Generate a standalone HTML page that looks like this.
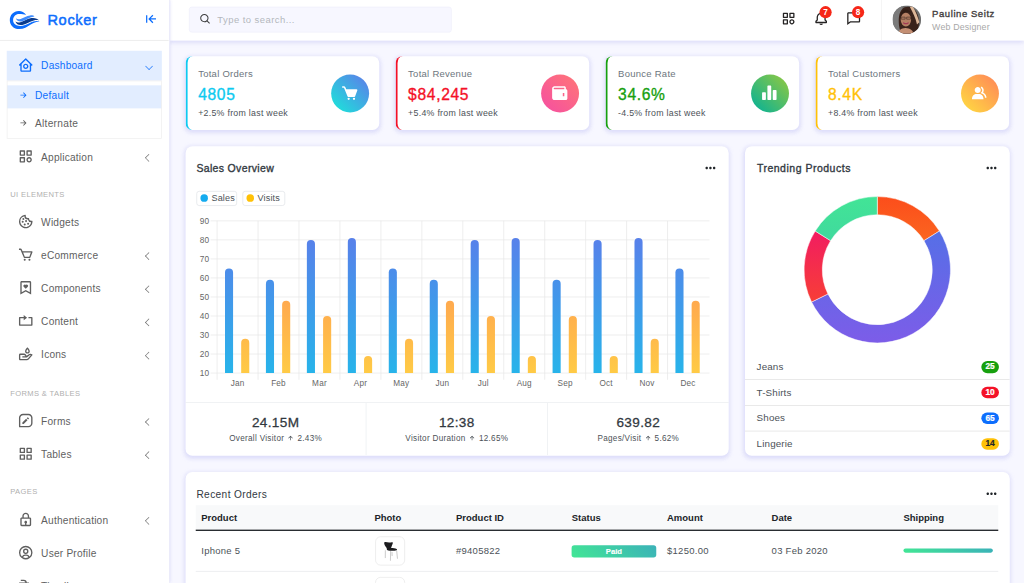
<!DOCTYPE html>
<html lang="en">
<head>
<meta charset="utf-8">
<title>Rocker - Dashboard</title>
<style>
*{box-sizing:border-box}
html,body{margin:0;padding:0;width:1024px;height:583px;overflow:hidden;background:#f7f7ff}
body{font-family:"Liberation Sans",Arial,sans-serif;color:#4c5258}
#wrap{position:absolute;left:0;top:0;width:1512px;height:861px;transform:scale(0.677249);transform-origin:0 0;font-size:14px;letter-spacing:.2px;overflow:hidden;background:#f7f7ff}
p,h4,h5,h6,ul{margin:0;padding:0}
ul{list-style:none}
svg{display:block}
/* sidebar */
#sidebar{position:absolute;left:0;top:0;width:249.5px;height:861px;background:#fff;box-shadow:0 2px 6px rgba(218,218,253,.85),0 2px 6px rgba(206,206,238,.7),1px 0 0 #eaeafa,3px 0 3px rgba(218,218,253,.55)}
#sb-head{position:absolute;left:0;top:0;width:249px;height:59.8px;border-bottom:1px solid #e4e4e4;display:flex;align-items:center;padding:0 15px}
#sb-head .logo-text{position:absolute;left:70px;top:14.8px;font-size:21.5px;line-height:30px;color:#0d6efd;font-weight:normal;-webkit-text-stroke:.7px #0d6efd;letter-spacing:1px}
#sb-head .tog{margin-left:auto;color:#008cff}
#menu{position:absolute;left:0;top:0;width:249px;height:861px}
#menu a.mi{position:absolute;left:10px;width:229px;display:flex;align-items:center;height:44px;padding:0 15px 0 16.2px;color:#5f5f5f;font-size:15px;letter-spacing:.3px}
#menu a.mi .ic{width:24px;height:24px;flex:none}
#menu a.mi .t{margin-left:10.5px;position:relative;top:.7px}
#menu a.mi.act{color:#0d6efd;background:rgba(13,110,253,.12);padding-bottom:2.0px}
#menu a.mi.act .t{top:0}
#menu .lab{position:absolute;left:15px;color:#b0afaf;text-transform:uppercase;font-size:11.2px;letter-spacing:.55px;line-height:16px;height:16px;white-space:nowrap}
#menu .sub{position:absolute;left:10px;top:119px;width:229px;height:85.5px;border:1px solid #ededed}
#menu .sub a{position:absolute;left:0;width:227px;display:flex;align-items:center;height:34px;padding:0 15px 1.2px 15.5px;color:#5f5f5f;font-size:15px;letter-spacing:.45px}
#menu .sub a.act{color:#0d6efd;background:rgba(13,110,253,.12);padding-bottom:4.6px}
#menu .sub a svg{margin-right:10px}
.chev{position:absolute;width:7.5px;height:7.5px;border-left:1.05px solid currentColor;border-bottom:1.05px solid currentColor;opacity:.9}
.chev.l{left:205.5px;top:20px;transform:rotate(45deg)}
.chev.d{left:206px;top:18.5px;transform:rotate(-45deg)}
/* topbar */
#topbar{position:absolute;left:250px;top:0;width:1262px;height:59.5px;background:#fff;box-shadow:0 2px 6px rgba(218,218,253,.65),0 2px 6px rgba(206,206,238,.54)}
#search{position:absolute;left:29.3px;top:10.4px;width:387.8px;height:37.6px;background:#f7f7ff;border:1px solid #eeeefb;border-radius:4px;color:#b4b8bd;font-size:14px;line-height:36px;padding-left:40.600px;letter-spacing:.65px}
.cnt{position:absolute;top:8.700px;width:18px;height:18px;border-radius:50%;background:#f62718;color:#fff;font-size:12px;font-weight:bold;line-height:18px;text-align:center;letter-spacing:0}
#userbox{position:absolute;left:1051.3px;top:0;width:211px;height:60px;border-left:1px solid #f0f0f0}
#userbox .un{position:absolute;left:74px;top:10.800px;font-size:14px;line-height:18px;font-weight:normal;-webkit-text-stroke:.5px #413c3c;color:#413c3c;white-space:nowrap;letter-spacing:.85px}
#userbox .ud{position:absolute;left:74px;top:31.500px;font-size:13px;line-height:16px;color:#a8a8a8;white-space:nowrap;letter-spacing:.25px}
/* cards */
.card{position:absolute;background:#fff;border-radius:10px;box-shadow:0 2px 6px rgba(218,218,253,.65),0 2px 6px rgba(206,206,238,.54)}
.w{height:108.6px;top:83.2px;width:286px;border-left:3px solid #0dcaf0;padding:16.2px 16px 16px 15.6px}
.w .l1{color:#6c757d;font-size:14px;line-height:21px;letter-spacing:.4px}
.w .l2{font-size:23px;line-height:29px;margin:4.8px 0 4px;font-weight:normal;letter-spacing:1px;-webkit-text-stroke:.5px currentColor}
.w .l3{font-size:13px;line-height:19.5px;letter-spacing:.4px}
.w .ci{position:absolute;right:15.5px;top:26.4px;width:56px;height:56px;border-radius:50%;display:flex;align-items:center;justify-content:center}
h6{font-size:15.5px;line-height:19px;font-weight:normal;-webkit-text-stroke:.5px #32393f;color:#32393f;letter-spacing:.5px}
.dots{position:absolute;right:16px;top:21.500px}
.lg{position:absolute;top:66.3px;height:22.300px;border:1px solid #dee2e6;border-radius:4px;font-size:13.4px;line-height:19.500px;padding-left:5px;white-space:nowrap;letter-spacing:.2px;color:#4c5258}
.lg i{display:inline-block;width:10.800px;height:10.800px;border-radius:50%;margin-right:5.5px;vertical-align:-1px}
.stats{position:absolute;left:0;top:378.7px;width:100%;height:78px;border-top:1px solid #e9ecef;display:flex}
.stats>div{flex:1;text-align:center;padding-top:17px}
.stats>div:first-child{flex:none;width:266px}
.stats>div+div{border-left:1px solid #e9ecef}
.stats h5{font-size:20px;line-height:24px;font-weight:normal;-webkit-text-stroke:.42px #32393f;color:#32393f;margin:0;letter-spacing:.55px}
.stats small{font-size:12px;line-height:19px;display:block;letter-spacing:.45px;margin-top:1.800px}
.plist{position:absolute;left:0;top:306.700px;width:100%}
.plist li{display:flex;justify-content:space-between;align-items:center;height:38px;padding:0 16px 0 17.2px;font-size:14.5px;letter-spacing:.2px;color:#4c5258}
.plist li+li{border-top:1px solid #dfdfdf;padding-bottom:2.2px}
.plist b{display:inline-block;min-width:26.3px;height:17.700px;border-radius:10px;font-size:12.3px;line-height:17.700px;text-align:center;letter-spacing:0;position:relative;top:.9px;-webkit-text-stroke:.3px currentColor}
.plist li:first-child b{top:.5px}
.thead{position:absolute;background:#f8f9fa}
.thline{position:absolute;height:1.350px;background:#23272b}
.th{position:absolute;top:57.2px;font-size:14px;font-weight:bold;line-height:21px;color:#212529;white-space:nowrap;letter-spacing:0}
.td{position:absolute;font-size:14px;line-height:21px;color:#4c5258;white-space:nowrap;letter-spacing:.4px}
.rowline{position:absolute;height:1px;background:#e4e7ea}
.pimg{position:absolute;width:43.600px;height:43.600px;border:1px solid #e6e6e6;border-radius:8px;background:#fff;overflow:hidden}
.pimg svg{position:absolute;left:-1px;top:-1px}
.paid{position:absolute;height:17.500px;border-radius:4px;background:linear-gradient(45deg,#42e695,#3bb2b8);color:#fff;font-size:11.300px;font-weight:bold;line-height:19px;-webkit-text-stroke:.2px #fff;text-align:center;letter-spacing:0}
.prog{position:absolute;height:5.500px;border-radius:4px;background:linear-gradient(45deg,#42e695,#3bb2b8)}
</style>
</head>
<body>
<div id="wrap">

<!-- MAIN CONTENT -->
<div id="main">
  <div class="card w" style="left:274px;border-left-color:#0dcaf0">
    <p class="l1">Total Orders</p><h4 class="l2" style="color:#0dcaf0">4805</h4><p class="l3">+2.5% from last week</p>
    <div class="ci" style="background:linear-gradient(45deg,#17ead9,#6078ea)"><svg width="27" height="27" viewBox="0 0 24 24" fill="#fff"><path d="M21.822 7.431A1 1 0 0 0 21 7H7.333L6.179 4.230A1.994 1.994 0 0 0 4.333 3H2v2h2.333l4.744 11.385A1 1 0 0 0 10 17h8c.417 0 .790-.259.937-.648l3-8a1 1 0 0 0-.115-.921z"/><circle cx="10.500" cy="19.500" r="1.500"/><circle cx="17.500" cy="19.500" r="1.500"/></svg></div>
  </div>
  <div class="card w" style="left:584px;border-left-color:#f41127">
    <p class="l1">Total Revenue</p><h4 class="l2" style="color:#f41127">$84,245</h4><p class="l3">+5.4% from last week</p>
    <div class="ci" style="background:linear-gradient(45deg,#f54ea2,#ff7676)"><svg width="27" height="27" viewBox="0 0 24 24" fill="#fff"><path d="M20 7V5c0-1.103-.897-2-2-2H5C3.346 3 2 4.346 2 6v12c0 2.201 1.794 3 3 3h15c1.103 0 2-.897 2-2V9c0-1.103-.897-2-2-2zm-2 9h-2v-4h2v4zM5 7a1.001 1.001 0 0 1 0-2h13v2H5z"/></svg></div>
  </div>
  <div class="card w" style="left:894px;border-left-color:#17a00e">
    <p class="l1">Bounce Rate</p><h4 class="l2" style="color:#17a00e">34.6%</h4><p class="l3">-4.5% from last week</p>
    <div class="ci" style="background:linear-gradient(45deg,#00b09b,#96c93d)"><svg width="27" height="27" viewBox="0 0 24 24" fill="#fff"><path d="M6 21H3a1 1 0 0 1-1-1v-8a1 1 0 0 1 1-1h3a1 1 0 0 1 1 1v8a1 1 0 0 1-1 1zm7 0h-3a1 1 0 0 1-1-1V3a1 1 0 0 1 1-1h3a1 1 0 0 1 1 1v17a1 1 0 0 1-1 1zm7 0h-3a1 1 0 0 1-1-1V9a1 1 0 0 1 1-1h3a1 1 0 0 1 1 1v11a1 1 0 0 1-1 1z"/></svg></div>
  </div>
  <div class="card w" style="left:1204px;border-left-color:#ffc107">
    <p class="l1">Total Customers</p><h4 class="l2" style="color:#ffc107">8.4K</h4><p class="l3">+8.4% from last week</p>
    <div class="ci" style="background:linear-gradient(45deg,#ffdf40,#ff8359)"><svg width="27" height="27" viewBox="0 0 24 24" fill="#fff"><path d="M16.604 11.048a5.670 5.670 0 0 0 .751-3.440c-.179-1.784-1.175-3.361-2.803-4.440l-1.105 1.666c1.119.742 1.800 1.799 1.918 2.974a3.693 3.693 0 0 1-1.072 2.986l-1.192 1.192 1.618.475C18.951 13.701 19 17.957 19 18h2c0-1.789-.956-5.285-4.396-6.952z"/><path d="M9.500 12c2.206 0 4-1.794 4-4s-1.794-4-4-4-4 1.794-4 4 1.794 4 4 4zm1.500 1H8c-3.309 0-6 2.691-6 6v1h15v-1c0-3.309-2.691-6-6-6z"/></svg></div>
  </div>

  <div class="card" id="sales" style="left:274px;top:215.6px;width:802px;height:457px">
    <h6 style="position:absolute;left:16px;top:23.4px">Sales Overview</h6>
    <svg class="dots" width="22" height="22" viewBox="0 0 24 24" fill="#212529"><path d="M12 10c-1.100 0-2 .900-2 2s.900 2 2 2 2-.900 2-2-.900-2-2-2zm6 0c-1.100 0-2 .900-2 2s.900 2 2 2 2-.900 2-2-.900-2-2-2zM6 10c-1.100 0-2 .900-2 2s.900 2 2 2 2-.900 2-2-.900-2-2-2z"/></svg>
    <span class="lg" style="left:16px;width:60px"><i style="background:#14abef"></i>Sales</span>
    <span class="lg" style="left:84px;width:62.500px"><i style="background:#ffc107"></i>Visits</span>
    <svg style="position:absolute;left:0;top:0" width="802" height="456.4" viewBox="185.566 146.015 543.154 309.096">
      <defs><linearGradient id="gs" gradientUnits="userSpaceOnUse" x1="0" y1="215.3" x2="0" y2="418.5"><stop offset="0" stop-color="#6078ea"/><stop offset="1" stop-color="#17c5ea"/></linearGradient><linearGradient id="gv" gradientUnits="userSpaceOnUse" x1="0" y1="215.3" x2="0" y2="418.5"><stop offset="0" stop-color="#ff8359"/><stop offset="1" stop-color="#ffdf40"/></linearGradient></defs>
      <path d="M210.600 220.60H709.500M210.600 239.62H709.500M210.600 258.65H709.500M210.600 277.68H709.500M210.600 296.70H709.500M210.600 315.73H709.500M210.600 334.75H709.500M210.600 353.77H709.500M210.600 372.80H709.500M217.10 220.60V379.500M258.05 220.60V379.500M299.00 220.60V379.500M339.95 220.60V379.500M380.90 220.60V379.500M421.85 220.60V379.500M462.80 220.60V379.500M503.75 220.60V379.500M544.70 220.60V379.500M585.65 220.60V379.500M626.60 220.60V379.500M667.55 220.60V379.500" stroke="#e6e6e6" stroke-width="0.700" fill="none"/>
      <g font-family="Liberation Sans, Arial, sans-serif" font-size="8.300" fill="#666" text-anchor="end">
      <text x="209.300" y="223.40">90</text>
      <text x="209.300" y="242.43">80</text>
      <text x="209.300" y="261.45">70</text>
      <text x="209.300" y="280.48">60</text>
      <text x="209.300" y="299.50">50</text>
      <text x="209.300" y="318.53">40</text>
      <text x="209.300" y="337.55">30</text>
      <text x="209.300" y="356.57">20</text>
      <text x="209.300" y="375.60">10</text>
      </g>
      <g font-family="Liberation Sans, Arial, sans-serif" font-size="8.200" fill="#666" text-anchor="middle">
      <text x="237.57" y="385.600">Jan</text>
      <text x="278.52" y="385.600">Feb</text>
      <text x="319.48" y="385.600">Mar</text>
      <text x="360.43" y="385.600">Apr</text>
      <text x="401.38" y="385.600">May</text>
      <text x="442.33" y="385.600">Jun</text>
      <text x="483.27" y="385.600">Jul</text>
      <text x="524.23" y="385.600">Aug</text>
      <text x="565.18" y="385.600">Sep</text>
      <text x="606.12" y="385.600">Oct</text>
      <text x="647.08" y="385.600">Nov</text>
      <text x="688.02" y="385.600">Dec</text>
      </g>
      <g transform="translate(-0.45 0)"><path d="M225.42 372.80V272.21a4.05 4.05 0 0 1 8.1 0V372.80z" fill="url(#gs)"/>
      <path d="M241.62 372.80V342.61a4.05 4.05 0 0 1 8.1 0V372.80z" fill="url(#gv)"/>
      <path d="M266.37 372.80V283.63a4.05 4.05 0 0 1 8.1 0V372.80z" fill="url(#gs)"/>
      <path d="M282.57 372.80V304.56a4.05 4.05 0 0 1 8.1 0V372.80z" fill="url(#gv)"/>
      <path d="M307.32 372.80V243.68a4.05 4.05 0 0 1 8.1 0V372.80z" fill="url(#gs)"/>
      <path d="M323.53 372.80V319.78a4.05 4.05 0 0 1 8.1 0V372.80z" fill="url(#gv)"/>
      <path d="M348.27 372.80V241.77a4.05 4.05 0 0 1 8.1 0V372.80z" fill="url(#gs)"/>
      <path d="M364.48 372.80V359.73a4.05 4.05 0 0 1 8.1 0V372.80z" fill="url(#gv)"/>
      <path d="M389.22 372.80V272.21a4.05 4.05 0 0 1 8.1 0V372.80z" fill="url(#gs)"/>
      <path d="M405.43 372.80V342.61a4.05 4.05 0 0 1 8.1 0V372.80z" fill="url(#gv)"/>
      <path d="M430.18 372.80V283.63a4.05 4.05 0 0 1 8.1 0V372.80z" fill="url(#gs)"/>
      <path d="M446.38 372.80V304.56a4.05 4.05 0 0 1 8.1 0V372.80z" fill="url(#gv)"/>
      <path d="M471.12 372.80V243.68a4.05 4.05 0 0 1 8.1 0V372.80z" fill="url(#gs)"/>
      <path d="M487.32 372.80V319.78a4.05 4.05 0 0 1 8.1 0V372.80z" fill="url(#gv)"/>
      <path d="M512.08 372.80V241.77a4.05 4.05 0 0 1 8.1 0V372.80z" fill="url(#gs)"/>
      <path d="M528.28 372.80V359.73a4.05 4.05 0 0 1 8.1 0V372.80z" fill="url(#gv)"/>
      <path d="M553.03 372.80V283.63a4.05 4.05 0 0 1 8.1 0V372.80z" fill="url(#gs)"/>
      <path d="M569.23 372.80V319.78a4.05 4.05 0 0 1 8.1 0V372.80z" fill="url(#gv)"/>
      <path d="M593.98 372.80V243.68a4.05 4.05 0 0 1 8.1 0V372.80z" fill="url(#gs)"/>
      <path d="M610.18 372.80V359.73a4.05 4.05 0 0 1 8.1 0V372.80z" fill="url(#gv)"/>
      <path d="M634.93 372.80V241.77a4.05 4.05 0 0 1 8.1 0V372.80z" fill="url(#gs)"/>
      <path d="M651.13 372.80V342.61a4.05 4.05 0 0 1 8.1 0V372.80z" fill="url(#gv)"/>
      <path d="M675.88 372.80V272.21a4.05 4.05 0 0 1 8.1 0V372.80z" fill="url(#gs)"/>
      <path d="M692.08 372.80V304.56a4.05 4.05 0 0 1 8.1 0V372.80z" fill="url(#gv)"/></g>
    </svg>
    <div class="stats">
      <div><h5>24.15M</h5><small>Overall Visitor <svg width="12" height="12" viewBox="0 0 24 24" fill="currentColor" style="display:inline-block;vertical-align:-2px"><path d="M11 8.414V18h2V8.414l4.293 4.293 1.414-1.414L12 4.586l-6.707 6.707 1.414 1.414z"/></svg> 2.43%</small></div>
      <div><h5>12:38</h5><small>Visitor Duration <svg width="12" height="12" viewBox="0 0 24 24" fill="currentColor" style="display:inline-block;vertical-align:-2px"><path d="M11 8.414V18h2V8.414l4.293 4.293 1.414-1.414L12 4.586l-6.707 6.707 1.414 1.414z"/></svg> 12.65%</small></div>
      <div><h5>639.82</h5><small>Pages/Visit <svg width="12" height="12" viewBox="0 0 24 24" fill="currentColor" style="display:inline-block;vertical-align:-2px"><path d="M11 8.414V18h2V8.414l4.293 4.293 1.414-1.414L12 4.586l-6.707 6.707 1.414 1.414z"/></svg> 5.62%</small></div>
    </div>
  </div>
  <div class="card" id="trend" style="left:1100px;top:215.6px;width:391px;height:457px;overflow:hidden">
    <h6 style="position:absolute;left:17.6px;top:23.4px;letter-spacing:.75px">Trending Products</h6>
    <svg class="dots" width="22" height="22" viewBox="0 0 24 24" fill="#212529"><path d="M12 10c-1.100 0-2 .900-2 2s.900 2 2 2 2-.900 2-2-.900-2-2-2zm6 0c-1.100 0-2 .900-2 2s.900 2 2 2 2-.900 2-2-.900-2-2-2zM6 10c-1.100 0-2 .900-2 2s.900 2 2 2 2-.900 2-2-.900-2-2-2z"/></svg>
    <svg style="position:absolute;left:0;top:0" width="391" height="456.4" viewBox="744.974 146.015 264.804 309.096">
      <defs><linearGradient id="g1" gradientUnits="userSpaceOnUse" x1="0" y1="190" x2="0" y2="393.2"><stop offset="0" stop-color="#fc4a1a"/><stop offset="1" stop-color="#f7b733"/></linearGradient><linearGradient id="g2" gradientUnits="userSpaceOnUse" x1="0" y1="190" x2="0" y2="393.2"><stop offset="0" stop-color="#4776e6"/><stop offset="1" stop-color="#8e54e9"/></linearGradient><linearGradient id="g3" gradientUnits="userSpaceOnUse" x1="0" y1="190" x2="0" y2="393.2"><stop offset="0" stop-color="#ee0979"/><stop offset="1" stop-color="#ff6a00"/></linearGradient><linearGradient id="g4" gradientUnits="userSpaceOnUse" x1="0" y1="190" x2="0" y2="393.2"><stop offset="0" stop-color="#42e695"/><stop offset="1" stop-color="#3bb2b8"/></linearGradient></defs>
      <path d="M877.30 196.30A73.2 73.2 0 0 1 939.42 230.78L923.98 240.41A55.0 55.0 0 0 0 877.30 214.50z" fill="url(#g1)" stroke="#fff" stroke-width="0.500"/><path d="M939.42 230.78A73.2 73.2 0 1 1 811.58 301.74L827.92 293.72A55.0 55.0 0 1 0 923.98 240.41z" fill="url(#g2)" stroke="#fff" stroke-width="0.500"/><path d="M811.58 301.74A73.2 73.2 0 0 1 815.18 230.78L830.62 240.41A55.0 55.0 0 0 0 827.92 293.72z" fill="url(#g3)" stroke="#fff" stroke-width="0.500"/><path d="M815.18 230.78A73.2 73.2 0 0 1 877.30 196.30L877.30 214.50A55.0 55.0 0 0 0 830.62 240.41z" fill="url(#g4)" stroke="#fff" stroke-width="0.500"/>
    </svg>
    <ul class="plist"><li><span>Jeans</span><b style="background:#17a00e;color:#fff">25</b></li><li><span>T-Shirts</span><b style="background:#f41127;color:#fff">10</b></li><li><span>Shoes</span><b style="background:#0d6efd;color:#fff">65</b></li><li><span>Lingerie</span><b style="background:#ffc107;color:#212529">14</b></li></ul>
  </div>
  <div class="card" id="orders" style="left:274px;top:696.9px;width:1217px;height:300px">
    <h6 style="position:absolute;left:16px;top:24.3px;-webkit-text-stroke:0;font-size:15px;letter-spacing:.55px">Recent Orders</h6>
    <svg class="dots" width="22" height="22" viewBox="0 0 24 24" fill="#212529"><path d="M12 10c-1.100 0-2 .900-2 2s.900 2 2 2 2-.900 2-2-.900-2-2-2zm6 0c-1.100 0-2 .900-2 2s.900 2 2 2 2-.900 2-2-.900-2-2-2zM6 10c-1.100 0-2 .900-2 2s.900 2 2 2 2-.900 2-2-.900-2-2-2z"/></svg>
    <div class="thead" style="left:15.4px;top:49.0px;width:1185.1px;height:36.5px"></div>
    <div class="thline" style="left:15.4px;top:85.5px;width:1185.1px"></div>
    <span class="th" style="left:23.2px">Product</span><span class="th" style="left:278.8px">Photo</span><span class="th" style="left:399.3px">Product ID</span><span class="th" style="left:570.2px">Status</span><span class="th" style="left:710.9px">Amount</span><span class="th" style="left:865.3px">Date</span><span class="th" style="left:1059.9px">Shipping</span>
    <div class="rowline" style="left:15.4px;top:146.6px;width:1185.1px"></div>
    <span class="td" style="left:23.2px;top:106.2px">Iphone 5</span>
    <div class="pimg" style="left:280.0px;top:95.0px"><svg width="43.600" height="43.600" viewBox="0 0 43.600 43.600"><path d="M15 20.500 14.900 32M22.800 21.300 22.500 36M31.700 21 32.900 33M24.800 23 25 29" stroke="#b9b9b9" stroke-width="1.100" fill="none"/><path d="M13.200 9.600c0-1 .800-1.400 2-1.200 3.500.700 6.500.700 9.500.200 1-.200 1.600.400 1.300 1.400-.800 2.600-2 5-2.600 7.300 3 .100 6.500.500 8.300 1.400.800.400.800 1.200 0 1.600-2.500 1.200-8.500 1.400-12.500.600-1.300-.300-2-.900-2-1.900 0-.800-.300-1.500-.800-2.400-1.500-2.300-3-4.500-3.200-7z" fill="#1d1d1f"/></svg></div>
    <div class="pimg" style="left:280.0px;top:155.4px"></div>
    <span class="td" style="left:399.3px;top:106.2px">#9405822</span>
    <span class="paid" style="left:570.3px;top:108.6px;width:124.3px">Paid</span>
    <span class="td" style="left:710.9px;top:106.2px">$1250.00</span>
    <span class="td" style="left:865.3px;top:106.2px">03 Feb 2020</span>
    <div class="prog" style="left:1059.9px;top:113.2px;width:132.6px"></div>
  </div>
</div>

<!-- TOPBAR -->
<div id="topbar">
  <div id="search">Type to search...</div>
  <svg width="18.6" height="18.6" viewBox="0 0 24 24" fill="#404142" style="position:absolute;left:44.19999999999999px;top:19.2px"><path d="M10 18a7.952 7.952 0 0 0 4.897-1.688l4.396 4.396 1.414-1.414-4.396-4.396A7.952 7.952 0 0 0 18 10c0-4.411-3.589-8-8-8s-8 3.589-8 8 3.589 8 8 8zm0-14c3.309 0 6 2.691 6 6s-2.691 6-6 6-6-2.691-6-6 2.691-6 6-6z"/></svg>
  <svg width="23" height="23" viewBox="0 0 24 24" fill="#252323" style="position:absolute;left:903.0999999999999px;top:15.8px"><path d="M10 3H4a1 1 0 0 0-1 1v6a1 1 0 0 0 1 1h6a1 1 0 0 0 1-1V4a1 1 0 0 0-1-1zM9 9H5V5h4v4zm11-6h-6a1 1 0 0 0-1 1v6a1 1 0 0 0 1 1h6a1 1 0 0 0 1-1V4a1 1 0 0 0-1-1zm-1 6h-4V5h4v4zm-9 4H4a1 1 0 0 0-1 1v6a1 1 0 0 0 1 1h6a1 1 0 0 0 1-1v-6a1 1 0 0 0-1-1zm-1 6H5v-4h4v4zm8-6c-2.206 0-4 1.794-4 4s1.794 4 4 4 4-1.794 4-4-1.794-4-4-4zm0 6c-1.103 0-2-.897-2-2s.897-2 2-2 2 .897 2 2-.897 2-2 2z"/></svg>
  <svg width="23" height="23" viewBox="0 0 24 24" fill="#252323" style="position:absolute;left:950.8px;top:15.8px"><path d="M19 13.586V10c0-3.217-2.185-5.927-5.145-6.742C13.562 2.520 12.846 2 12 2s-1.562.520-1.855 1.258C7.185 4.074 5 6.783 5 10v3.586l-1.707 1.707A.996.996 0 0 0 3 16v2a1 1 0 0 0 1 1h16a1 1 0 0 0 1-1v-2a.996.996 0 0 0-.293-.707L19 13.586zM19 17H5v-.586l1.707-1.707A.996.996 0 0 0 7 14v-4c0-2.757 2.243-5 5-5s5 2.243 5 5v4c0 .266.105.520.293.707L19 16.414V17zm-7 5a2.980 2.980 0 0 0 2.818-2H9.182A2.980 2.980 0 0 0 12 22z"/></svg>
  <svg width="23" height="23" viewBox="0 0 24 24" fill="#252323" style="position:absolute;left:998.5999999999999px;top:15.8px"><path d="M20 2H4c-1.103 0-2 .897-2 2v18l5.333-4H20c1.103 0 2-.897 2-2V4c0-1.103-.897-2-2-2zm0 14H6.667L4 18V4h16v12z"/></svg>
  <span class="cnt" style="left:960.0999999999999px">7</span>
  <span class="cnt" style="left:1008px">8</span>
  <div id="userbox">
    <svg width="42" height="42" viewBox="0 0 42 42" style="position:absolute;left:15.5px;top:7.800px">
      <defs><clipPath id="avc"><circle cx="21" cy="21" r="21"/></clipPath></defs>
      <g clip-path="url(#avc)">
        <rect width="42" height="42" fill="#6c6c6c"/>
        <rect x="0" width="14" height="42" fill="#7b7b7b"/>
        <path d="M9.500 30C8.500 20 9 11 14 5.500c4-4.500 13-4.500 17-.500 5 4 8 12 8 20 0 7-2 12-5 17H14c-2-3-4-7-4.500-12z" fill="#3a231b"/>
        <path d="M25.500 2.500c2-1.300 4.300-.800 5.300 1 3 5.500 6.500 13 8.700 21.500l-3.500 3c-2-9-6-17.500-10.500-25.500z" fill="#dcb698"/>
        <ellipse cx="19.600" cy="21" rx="7.700" ry="10.200" fill="#b58064"/>
        <path d="M11.500 18c1-6 6-9.500 12-8.500 2 .300 3.500 1.500 4.500 3-2-4.500-6-7-10-6.300-4.500.800-7.500 5.500-6.500 11.800z" fill="#2f1c15"/>
        <path d="M12.700 17.300h5.800v3h-5.800zm8 0h5.800v3h-5.800z" fill="none" stroke="#4a3229" stroke-width="1"/>
        <path d="M16.300 25.900c2 1.300 4.600 1.300 6.600 0" stroke="#a33a56" stroke-width="1.900" fill="none" stroke-linecap="round"/>
        <path d="M8 42c1-5 4-8 11-8.500 7 .500 11 3.500 12 8.500z" fill="#c48f73"/>
      </g>
    </svg>
    <p class="un">Pauline Seitz</p>
    <p class="ud">Web Designer</p>
  </div>
</div>

<!-- SIDEBAR -->
<div id="sidebar">
  <div id="sb-head">
    <svg width="47.25" height="31" viewBox="9 9 32 21" style="position:absolute;left:13.3px;top:14px">
      <path fill="#0d6efd" d="M26.4 14.4C24.5 11.800 21.5 10.500 19 10.600C13.500 10.800 10 14.800 10 19.700C10 24.800 14 28.600 19.300 28.600C24 28.600 27.500 26.500 30.500 24.300C33.500 22.100 36.500 21 39.800 20.900C36.500 19.900 33.500 20.600 30.500 22.300C27 24.300 23.500 25.400 20.500 25.400C16 25.400 13.300 23 13.300 19.700C13.300 16.200 15.800 13.600 19.300 13.600C22 13.600 24.300 14 26.400 14.400Z"/>
      <path fill="#0b3b8c" d="M15.600 21.100C17 22.200 18.700 22.400 20.500 21.800C24 20.600 27.500 18.300 31.500 17.600C35 17.100 37.700 18.200 39.400 19.900C37.500 19.500 36 19.500 34 20C30 21 27 23.500 22.500 24.400C19.500 24.900 16.600 24.200 15.600 21.100Z"/>
      <path fill="#3d8bfd" d="M16.100 17.800C17.500 18.900 19.200 19 20.800 18.400C24 17.200 26.700 15.300 30.300 14.900C32.300 14.700 33.800 15.100 34.600 15.900C33 16 31.800 16.500 30 17.300C27 18.600 24.500 20.500 21.500 21C19 21.300 16.900 20.200 16.100 17.800Z"/>
    </svg>
    <div class="logo-text">Rocker</div>
    <svg width="22" height="22" viewBox="0 0 24 24" fill="#0d6efd" style="position:absolute;left:212px;top:17px"><path d="M4 6h2v12H4zm10.293-.707L7.586 12l6.707 6.707 1.414-1.414L11.414 13H20v-2h-8.586l4.293-4.293z"/></svg>
  </div>
  <div id="menu">
    <a class="mi act" style="top:75px"><svg class="ic" width="24" height="24" viewBox="0 0 24 24" fill="currentColor"><path d="M3 13h1v7c0 1.103.897 2 2 2h12c1.103 0 2-.897 2-2v-7h1a1 1 0 0 0 .707-1.707l-9-9a.999.999 0 0 0-1.414 0l-9 9A1 1 0 0 0 3 13zm9-8.586 6 6V20H6v-9.586l6-6z"/><path d="M12 18c2.206 0 4-1.794 4-4s-1.794-4-4-4-4 1.794-4 4 1.794 4 4 4zm0-6c1.103 0 2 .897 2 2s-.897 2-2 2-2-.897-2-2 .897-2 2-2z"/></svg><span class="t">Dashboard</span><span class="chev d"></span></a>
    <a class="mi" style="top:208.5px"><svg class="ic" width="24" height="24" viewBox="0 0 24 24" fill="currentColor"><path d="M10 3H4a1 1 0 0 0-1 1v6a1 1 0 0 0 1 1h6a1 1 0 0 0 1-1V4a1 1 0 0 0-1-1zM9 9H5V5h4v4zm11-6h-6a1 1 0 0 0-1 1v6a1 1 0 0 0 1 1h6a1 1 0 0 0 1-1V4a1 1 0 0 0-1-1zm-1 6h-4V5h4v4zm-9 4H4a1 1 0 0 0-1 1v6a1 1 0 0 0 1 1h6a1 1 0 0 0 1-1v-6a1 1 0 0 0-1-1zm-1 6H5v-4h4v4zm8-6c-2.206 0-4 1.794-4 4s1.794 4 4 4 4-1.794 4-4-1.794-4-4-4zm0 6c-1.103 0-2-.897-2-2s.897-2 2-2 2 .897 2 2-.897 2-2 2z"/></svg><span class="t">Application</span><span class="chev l"></span></a>
    <a class="mi" style="top:305px"><svg class="ic" width="24" height="24" viewBox="0 0 24 24" fill="currentColor"><path d="M21.598 11.064a1.006 1.006 0 0 0-.854-.172A2.938 2.938 0 0 1 20 11c-1.654 0-3-1.346-3.003-2.937.005-.034.016-.136.017-.17a.998.998 0 0 0-1.254-1.006A2.963 2.963 0 0 1 15 7c-1.654 0-3-1.346-3-3 0-.217.031-.444.099-.716a1 1 0 0 0-1.067-1.236A9.956 9.956 0 0 0 2 12c0 5.514 4.486 10 10 10s10-4.486 10-10c0-.049-.003-.097-.007-.16a1.004 1.004 0 0 0-.395-.776zM12 20c-4.411 0-8-3.589-8-8a7.962 7.962 0 0 1 6.006-7.75A5.006 5.006 0 0 0 15 9l.101-.001a5.007 5.007 0 0 0 4.837 4C19.444 16.941 16.073 20 12 20z"/><circle cx="12.5" cy="11.5" r="1.5"/><circle cx="8.5" cy="8.5" r="1.5"/><circle cx="7.5" cy="12.5" r="1.5"/><circle cx="15.5" cy="15.5" r="1.5"/><circle cx="10.5" cy="16.5" r="1.5"/></svg><span class="t">Widgets</span></a>
    <a class="mi" style="top:354px"><svg class="ic" width="24" height="24" viewBox="0 0 24 24" fill="currentColor"><path d="M21.822 7.431A1 1 0 0 0 21 7H7.333L6.179 4.23A1.994 1.994 0 0 0 4.333 3H2v2h2.333l4.744 11.385A1 1 0 0 0 10 17h8c.417 0 .79-.259.937-.648l3-8a1 1 0 0 0-.115-.921zM17.307 15h-6.64l-2.5-6h11.39l-2.25 6z"/><circle cx="10.5" cy="19.5" r="1.5"/><circle cx="17.5" cy="19.5" r="1.5"/></svg><span class="t">eCommerce</span><span class="chev l"></span></a>
    <a class="mi" style="top:403px"><svg class="ic" width="24" height="24" viewBox="0 0 24 24" fill="currentColor"><path d="M18 2H6c-1.103 0-2 .897-2 2v18l8-4.572L20 22V4c0-1.103-.897-2-2-2zm0 16.553-6-3.428-6 3.428V4h12v14.553z"/><path d="M12 13.4 8.9 10.3a2 2 0 0 1 2.8-2.8l.3.3.3-.3a2 2 0 0 1 2.8 2.8z"/></svg><span class="t">Components</span><span class="chev l"></span></a>
    <a class="mi" style="top:452px"><svg class="ic" width="24" height="24" viewBox="0 0 24 24" fill="currentColor"><path d="M21 6h-5v2h4v9H4V8h5v3l5-4-5-4v3H3a1 1 0 0 0-1 1v11a1 1 0 0 0 1 1h18a1 1 0 0 0 1-1V7a1 1 0 0 0-1-1z"/></svg><span class="t">Content</span><span class="chev l"></span></a>
    <a class="mi" style="top:501px"><svg class="ic" width="24" height="24" viewBox="0 0 24 24" fill="currentColor"><path d="M4 21h9.62a4 4 0 0 0 3.04-1.4l5.1-5.95a1 1 0 0 0-.44-1.6l-1.97-.66a3.04 3.04 0 0 0-2.82.5l-3.19 2.55-.62-1.24A3.98 3.98 0 0 0 9.15 11H4a2 2 0 0 0-2 2v6c0 1.1.9 2 2 2zm0-8h5.15c.76 0 1.45.42 1.79 1.1l.45.9H7v2h6.01a1 1 0 0 0 .62-.22l4.15-3.32c.26-.2.62-.27.94-.16l.56.18-4.13 4.83a2.03 2.03 0 0 1-1.52.69H4v-6z"/><path d="M13.761 2.326C13.3 2.832 11 5.457 11 7.5c0 1.93 1.57 3.5 3.5 3.5S18 9.43 18 7.5c0-2.043-2.3-4.668-2.761-5.174-.379-.416-1.099-.416-1.478 0zM16 7.5c0 .827-.673 1.500-1.500 1.500S13 8.327 13 7.500c0-.708.738-1.934 1.500-2.934.762 1 1.500 2.226 1.500 2.934z"/></svg><span class="t">Icons</span><span class="chev l"></span></a>
    <a class="mi" style="top:598.5px"><svg class="ic" width="24" height="24" viewBox="0 0 24 24" fill="currentColor"><path d="M16 2H8C4.691 2 2 4.691 2 8v13a1 1 0 0 0 1 1h13c3.309 0 6-2.691 6-6V8c0-3.309-2.691-6-6-6zm4 14c0 2.206-1.794 4-4 4H4V8c0-2.206 1.794-4 4-4h8c2.206 0 4 1.794 4 4v8z"/><path d="M7 14.987v1.999h1.999l5.529-5.522-1.998-1.998zm8.470-4.465-1.998-2L14.995 7l2 1.999z"/></svg><span class="t">Forms</span><span class="chev l"></span></a>
    <a class="mi" style="top:647.5px"><svg class="ic" width="24" height="24" viewBox="0 0 24 24" fill="currentColor"><path d="M10 3H4a1 1 0 0 0-1 1v6a1 1 0 0 0 1 1h6a1 1 0 0 0 1-1V4a1 1 0 0 0-1-1zM9 9H5V5h4v4zm11-6h-6a1 1 0 0 0-1 1v6a1 1 0 0 0 1 1h6a1 1 0 0 0 1-1V4a1 1 0 0 0-1-1zm-1 6h-4V5h4v4zm-9 4H4a1 1 0 0 0-1 1v6a1 1 0 0 0 1 1h6a1 1 0 0 0 1-1v-6a1 1 0 0 0-1-1zm-1 6H5v-4h4v4zm11-6h-6a1 1 0 0 0-1 1v6a1 1 0 0 0 1 1h6a1 1 0 0 0 1-1v-6a1 1 0 0 0-1-1zm-1 6h-4v-4h4v4z"/></svg><span class="t">Tables</span><span class="chev l"></span></a>
    <a class="mi" style="top:744.5px"><svg class="ic" width="24" height="24" viewBox="0 0 24 24" fill="currentColor"><path d="M12 2C9.243 2 7 4.243 7 7v2H6c-1.103 0-2 .897-2 2v9c0 1.103.897 2 2 2h12c1.103 0 2-.897 2-2v-9c0-1.103-.897-2-2-2h-1V7c0-2.757-2.243-5-5-5zM9 7c0-1.654 1.346-3 3-3s3 1.346 3 3v2H9V7zm9.002 13H13v-2.278c.595-.347 1-.985 1-1.722 0-1.103-.897-2-2-2s-2 .897-2 2c0 .736.405 1.375 1 1.722V20H6v-9h12l.002 9z"/></svg><span class="t">Authentication</span><span class="chev l"></span></a>
    <a class="mi" style="top:793.5px"><svg class="ic" width="24" height="24" viewBox="0 0 24 24" fill="currentColor"><path d="M12 2A10.13 10.13 0 0 0 2 12a10 10 0 0 0 4 7.920V20h.1a9.700 9.700 0 0 0 11.800 0h.1v-.080A10 10 0 0 0 22 12 10.130 10.130 0 0 0 12 2zM8.070 18.930A3 3 0 0 1 11 16.570h2a3 3 0 0 1 2.930 2.360 7.750 7.750 0 0 1-7.860 0zm9.540-1.290A5 5 0 0 0 13 14.570h-2a5 5 0 0 0-4.610 3.070A8 8 0 0 1 4 12a8.100 8.100 0 0 1 8-8 8.100 8.100 0 0 1 8 8 8 8 0 0 1-2.390 5.640z"/><path d="M12 6a3.910 3.910 0 0 0-4 4 3.910 3.910 0 0 0 4 4 3.910 3.910 0 0 0 4-4 3.910 3.910 0 0 0-4-4zm0 6a1.910 1.910 0 0 1-2-2 1.910 1.910 0 0 1 2-2 1.910 1.910 0 0 1 2 2 1.910 1.910 0 0 1-2 2z"/></svg><span class="t">User Profile</span></a>
    <a class="mi" style="top:842.5px"><svg class="ic" width="24" height="24" viewBox="0 0 24 24" fill="currentColor"><path d="M4.700 3.900h4.300a3.600 3.600 0 0 1 3.600 3.600v.700M2.200 8h14.600" fill="none" stroke="currentColor" stroke-width="2"/><path d="M2.200 8v12h14.600V8" fill="none" stroke="currentColor" stroke-width="2"/></svg><span class="t">Timeline</span></a>
    <div class="sub"><a class="act" style="top:6px"><svg width="15" height="15" viewBox="0 0 24 24" fill="currentColor"><path d="m11.293 17.293 1.414 1.414L19.414 12l-6.707-6.707-1.414 1.414L15.586 11H5v2h10.586z"/></svg><span>Default</span></a><a style="top:45px"><svg width="15" height="15" viewBox="0 0 24 24" fill="currentColor"><path d="m11.293 17.293 1.414 1.414L19.414 12l-6.707-6.707-1.414 1.414L15.586 11H5v2h10.586z"/></svg><span>Alternate</span></a></div>
    <div class="lab" style="top:279.2px">UI Elements</div>
    <div class="lab" style="top:572.3px">Forms &amp; Tables</div>
    <div class="lab" style="top:717.7px">Pages</div>
  </div>
</div>

</div>
</body>
</html>
